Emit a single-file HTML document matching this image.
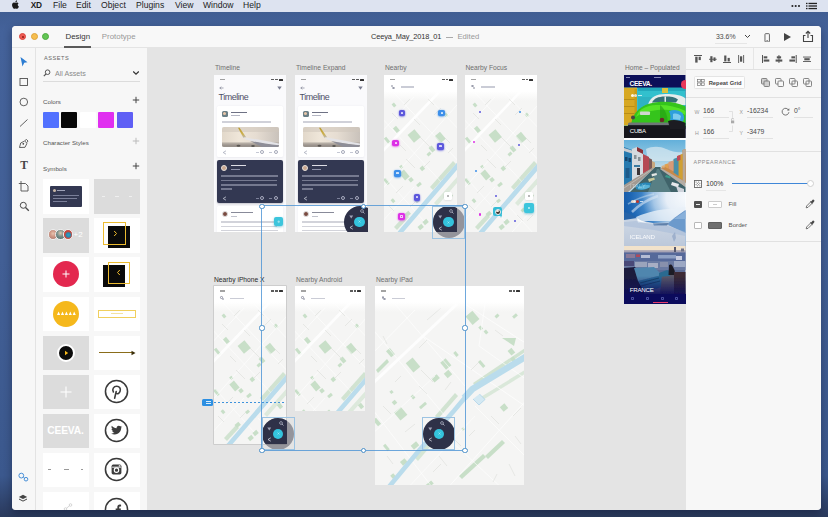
<!DOCTYPE html>
<html>
<head>
<meta charset="utf-8">
<title>XD</title>
<style>
*{margin:0;padding:0;box-sizing:border-box}
html,body{width:828px;height:517px;overflow:hidden}
body{font-family:"Liberation Sans",sans-serif;position:relative;background:linear-gradient(180deg,#3d5a8e 0%,#44629a 6%,#425f95 50%,#3b588d 92%,#2c3d62 99%,#2a3a5c 100%);color:#444}
.abs{position:absolute}
#menubar{position:absolute;left:0;top:0;width:828px;height:12px;background:#dde3f0;}
#menubar span{position:absolute;top:-.7px;line-height:12px;font-size:8.6px;color:#1c1c1c;white-space:nowrap}
#win{position:absolute;left:12px;top:26px;width:809px;height:484px;background:#f7f7f7;border-radius:4px;overflow:hidden;box-shadow:0 3px 9px rgba(0,0,20,.33)}
#titlebar{position:absolute;left:0;top:0;width:809px;height:22px;background:#f8f8f8;border-bottom:1px solid #e4e4e4}
.tl{position:absolute;top:7.400px;width:7px;height:7px;border-radius:50%}
#titlebar .t{position:absolute;top:0;line-height:22px;font-size:7.8px;white-space:nowrap}
#tools{position:absolute;left:0;top:22px;width:24px;height:462px;background:#f7f7f7;border-right:1px solid #e3e3e3}
#assets{position:absolute;left:24px;top:22px;width:111px;height:462px;background:#f7f7f7;overflow:hidden}
#canvas{position:absolute;left:135px;top:22px;width:540px;height:462px;background:#e4e4e4;overflow:hidden}
#props{position:absolute;left:674px;top:22px;width:135px;height:462px;background:#f7f7f7;overflow:hidden}
.lbl{position:absolute;font-size:7px;color:#555;white-space:nowrap;line-height:8px}
.hr{position:absolute;height:1px;background:#e1e1e1}
.cell{position:absolute;width:46px;height:34.600px;background:#fff;overflow:hidden}
.ab{position:absolute;background:#fff;overflow:hidden}
.abl{position:absolute;font-size:6.700px;color:#6b6b6b;white-space:nowrap;line-height:8px}
.hd{position:absolute;width:5px;height:5px;border-radius:50%;background:#fff;border:1px solid #4a90c8}
.sel{position:absolute;border:1px solid #4a9ad4}
</style>
</head>
<body>
<!-- MENUBAR -->
<div id="menubar">
<svg class="abs" style="left:10.800px;top:.3px" width="8.300" height="9.200" viewBox="0 0 18 20"><path fill="#1a1a1a" d="M14.6 10.6c0-2.3 1.9-3.4 2-3.5-1.1-1.6-2.8-1.8-3.4-1.8-1.4-.1-2.8.9-3.5.9-.7 0-1.800-.800-3-.800C5.200 5.400 3.800 6.300 3 7.700c-1.600 2.800-.4 6.900 1.200 9.200.800 1.100 1.700 2.400 2.900 2.300 1.200 0 1.600-.700 3-.700s1.800.700 3 .700c1.200 0 2-1.100 2.800-2.200.900-1.300 1.300-2.500 1.300-2.600-.100 0-2.600-1-2.600-3.800zM12.300 3.700c.600-.800 1.100-1.900.900-3-.900 0-2.100.600-2.700 1.400-.600.700-1.100 1.800-1 2.800 1.100.100 2.200-.500 2.800-1.200z"/></svg>
<span style="left:30.700px;font-weight:bold;font-size:8.300px;letter-spacing:-.2px">XD</span>
<span style="left:53px">File</span>
<span style="left:76px">Edit</span>
<span style="left:101px">Object</span>
<span style="left:136px">Plugins</span>
<span style="left:175px">View</span>
<span style="left:203px">Window</span>
<span style="left:243px">Help</span>
<svg class="abs" style="left:789px;top:1.500px" width="30" height="8" viewBox="0 0 30 8"><g fill="#222"><circle cx="3.400" cy="4" r="1.050"/><circle cx="6.700" cy="4" r="1.050"/><circle cx="10" cy="4" r="1.050"/><rect x="19.500" y=".8" width="8.500" height="1.300"/><rect x="19.500" y="3.350" width="8.500" height="1.300"/><rect x="19.500" y="5.900" width="8.500" height="1.300"/><rect x="17" y=".8" width="1.500" height="1.300"/><rect x="17" y="3.350" width="1.500" height="1.300"/><rect x="17" y="5.900" width="1.500" height="1.300"/></g></svg>
</div>

<div id="win">
<!-- TITLEBAR -->
<div id="titlebar">
<div class="tl" style="left:7px;background:#ee5c54;border:.5px solid #d9443d"></div>
<div class="tl" style="left:18.500px;background:#f6be4f;border:.5px solid #dea43a"></div>
<div class="tl" style="left:30px;background:#62c554;border:.5px solid #4dab3f"></div>
<div class="abs" style="left:9.500px;top:9.900px;width:2px;height:2px;border-radius:50%;background:#8c1a14"></div>
<span class="t" style="left:53.500px;color:#333;font-size:7.900px">Design</span>
<div class="abs" style="left:52px;top:20px;width:27px;height:2px;background:#5a5a5a"></div>
<span class="t" style="left:89.800px;color:#999;font-size:7.900px">Prototype</span>
<span class="t" style="left:359px;color:#333;font-size:7.400px;letter-spacing:-.12px">Ceeya_May_2018_01</span><div class="abs" style="left:433.500px;top:10.600px;width:7px;height:.9px;background:#aaa"></div><span class="t" style="left:445.400px;color:#999;font-size:7.700px">Edited</span>
<span class="t" style="left:704px;color:#4a4a4a;font-size:6.900px">33.6%</span>
<div class="abs" style="left:703px;top:17px;width:32px;height:1px;background:#e6e6e6"></div>
<svg class="abs" style="left:732px;top:8px" width="7" height="5" viewBox="0 0 7 5"><path d="M1 1l2.500 2.500L6 1" fill="none" stroke="#444" stroke-width="1"/></svg>
<svg class="abs" style="left:751.800px;top:6.500px" width="6.400" height="9.600" viewBox="0 0 8 12"><rect x="1.200" y=".8" width="5.600" height="10.400" rx="1" fill="none" stroke="#444" stroke-width="1"/><rect x="3" y="9.300" width="2" height=".8" fill="#444"/></svg>
<svg class="abs" style="left:771px;top:6px" width="9" height="10" viewBox="0 0 9 10"><path d="M1 1l7 4-7 4z" fill="#444"/></svg>
<svg class="abs" style="left:790px;top:4px" width="12" height="13" viewBox="0 0 12 13"><path d="M3.500 5.500H1.500v6h9v-6H8.500" fill="none" stroke="#444" stroke-width="1.100"/><path d="M6 8V1.500M3.800 3.500L6 1.300l2.200 2.200" fill="none" stroke="#444" stroke-width="1.100"/></svg>
</div>

<!-- TOOLBAR -->
<div id="tools">
<svg class="abs" style="left:7px;top:8px" width="10" height="12" viewBox="0 0 10 12"><path d="M1.500 1l7 5.300-3.300.5L3.500 10.500z" fill="#2d7dd2"/></svg>
<svg class="abs" style="left:7px;top:29px" width="10" height="10" viewBox="0 0 10 10"><rect x="1" y="1.500" width="7.500" height="7" fill="none" stroke="#505050" stroke-width=".9"/></svg>
<svg class="abs" style="left:7px;top:49px" width="10" height="10" viewBox="0 0 10 10"><circle cx="4.800" cy="5" r="3.800" fill="none" stroke="#505050" stroke-width=".9"/></svg>
<svg class="abs" style="left:7px;top:70px" width="10" height="10" viewBox="0 0 10 10"><path d="M1 8.500L8.500 1.500" stroke="#505050" stroke-width=".9"/></svg>
<svg class="abs" style="left:6px;top:90px" width="11" height="11" viewBox="0 0 11 11"><path d="M1.500 9.500l1.200-4.500 4-2 2.300 2.300-2 4z M7 2.500l1.500-1 1.500 1.500-1 1.500" fill="none" stroke="#505050" stroke-width=".9"/><circle cx="5.300" cy="5.800" r=".9" fill="#444"/></svg>
<div class="abs" style="left:6.500px;top:111px;width:11px;text-align:center;font-family:'Liberation Serif',serif;font-weight:bold;font-size:11.500px;line-height:12px;color:#444">T</div>
<svg class="abs" style="left:6px;top:132px" width="12" height="12" viewBox="0 0 12 12"><path d="M3 1v2.500H.8M3 3.500h4.500L10 6v5H3z" fill="none" stroke="#505050" stroke-width=".9"/></svg>
<svg class="abs" style="left:7px;top:153px" width="11" height="11" viewBox="0 0 11 11"><circle cx="4.300" cy="4.300" r="3" fill="none" stroke="#4a4a4a" stroke-width="1"/><path d="M6.500 6.500L9.800 9.800" stroke="#4a4a4a" stroke-width="1.300"/></svg>
<svg class="abs" style="left:5px;top:423.500px" width="12" height="10" viewBox="0 0 12 10"><circle cx="4.300" cy="3.600" r="2.400" fill="none" stroke="#3f8ad6" stroke-width=".95"/><circle cx="9" cy="7.200" r="1.800" fill="none" stroke="#3f8ad6" stroke-width=".95"/><path d="M6.300 5.100l1.200 .9" stroke="#3f8ad6" stroke-width=".95"/></svg>
<svg class="abs" style="left:6.200px;top:445.500px" width="10" height="9.200" viewBox="0 0 12 11"><path d="M6 1l5 2.500L6 6 1 3.500z" fill="#444"/><path d="M1.200 6L6 8.500 10.800 6" fill="none" stroke="#444" stroke-width="1.200"/></svg>
</div>

<!-- ASSETS -->
<div id="assets">
<!--ASSETS_CONTENT-->
<div class="abs" style="left:-1px;top:0;width:1px;height:462px;background:#e3e3e3"></div>
<div class="lbl" style="left:8px;top:5.800px;font-size:5.600px;letter-spacing:.55px;color:#666">ASSETS</div>
<svg class="abs" style="left:7px;top:21px" width="8" height="8" viewBox="0 0 8 8"><circle cx="4.600" cy="3.200" r="2.300" fill="none" stroke="#555" stroke-width="1"/><path d="M3 5L.8 7.200" stroke="#555" stroke-width="1.100"/></svg>
<div class="lbl" style="left:19px;top:21.800px;color:#8a8a8a;font-size:7.100px">All Assets</div>
<svg class="abs" style="left:96px;top:22px" width="8" height="6" viewBox="0 0 8 6"><path d="M1.200 1.500L4 4.200 6.800 1.500" fill="none" stroke="#333" stroke-width="1.200"/></svg>
<div class="hr" style="left:7px;top:33px;width:97px;background:#dcdcdc"></div>
<div class="lbl" style="left:7px;top:49.600px;font-size:6.200px">Colors</div>
<svg class="abs" style="left:96px;top:48px" width="8" height="8" viewBox="0 0 8 8"><path d="M4 .8v6.400M.8 4h6.400" stroke="#444" stroke-width="1"/></svg>
<div class="abs" style="left:7px;top:63.800px;width:16px;height:16px;background:#5271ff;border-radius:1px"></div>
<div class="abs" style="left:25.400px;top:63.800px;width:16px;height:16px;background:#060606;border-radius:1px"></div>
<div class="abs" style="left:43.900px;top:63.800px;width:16px;height:16px;background:#fff;border-radius:1px"></div>
<div class="abs" style="left:62.300px;top:63.800px;width:16px;height:16px;background:#e02ff0;border-radius:1px"></div>
<div class="abs" style="left:80.750px;top:63.800px;width:16px;height:16px;background:#5f5ff5;border-radius:1px"></div>
<div class="lbl" style="left:7px;top:90.700px;font-size:6.200px">Character Styles</div>
<svg class="abs" style="left:96px;top:89px" width="8" height="8" viewBox="0 0 8 8"><path d="M4 .8v6.400M.8 4h6.400" stroke="#bbb" stroke-width="1"/></svg>
<div class="lbl" style="left:7px;top:116.700px;font-size:6.200px">Symbols</div>
<svg class="abs" style="left:96px;top:114px" width="8" height="8" viewBox="0 0 8 8"><path d="M4 .8v6.400M.8 4h6.400" stroke="#444" stroke-width="1"/></svg>

<!-- row1 -->
<div class="cell" style="left:7px;top:131.2px"><div class="abs" style="left:7px;top:6.500px;width:32px;height:21px;background:#333852;border-radius:1px"></div><div class="abs" style="left:10px;top:10px;width:3px;height:3px;border-radius:50%;background:#c9b8a8"></div><div class="abs" style="left:14px;top:11px;width:8px;height:1px;background:#9ea2b8"></div><div class="abs" style="left:10px;top:16px;width:26px;height:1px;background:#7a7f99"></div><div class="abs" style="left:10px;top:19px;width:24px;height:1px;background:#7a7f99"></div><div class="abs" style="left:10px;top:22px;width:14px;height:1px;background:#7a7f99"></div></div>
<div class="cell" style="left:58px;top:131.2px;background:#dcdcdc"><div class="abs" style="left:8px;top:17px;width:3px;height:1px;background:#efefef"></div><div class="abs" style="left:21px;top:17px;width:4px;height:1px;background:#efefef"></div><div class="abs" style="left:35px;top:17px;width:3px;height:1px;background:#efefef"></div></div>
<!-- row2 -->
<div class="cell" style="left:7px;top:170.3px;background:#dcdcdc">
<div class="abs" style="left:4.500px;top:11px;width:10.500px;height:10.500px;border-radius:50%;background:radial-gradient(circle at 50% 40%,#e8c4b0 0,#d09a88 40%,#a8746a 100%);border:.8px solid #eee"></div>
<div class="abs" style="left:12px;top:11px;width:10.500px;height:10.500px;border-radius:50%;background:radial-gradient(circle at 50% 35%,#e0c8b0 0,#7a8f8a 45%,#4a6a68 100%);border:.8px solid #eee"></div>
<div class="abs" style="left:19.500px;top:11px;width:10.500px;height:10.500px;border-radius:50%;background:radial-gradient(circle at 55% 55%,#2aa3c9 0,#2a8ab0 30%,#c9463a 55%,#b83a30 100%);border:.8px solid #eee"></div>
<div class="abs" style="left:30.500px;top:12.500px;font-size:8px;line-height:8px;color:#fff">+2</div></div>
<div class="cell" style="left:58px;top:170.3px"><div class="abs" style="left:13.700px;top:8px;width:22px;height:21.500px;background:#0a0a0a"></div><div class="abs" style="left:9.400px;top:4px;width:22.400px;height:22.600px;border:1.900px solid #ecbb30"></div><svg class="abs" style="left:19px;top:12px" width="5" height="7" viewBox="0 0 5 7"><path d="M1.200 1l2.300 2.500L1.200 6" fill="none" stroke="#f0bc2e" stroke-width="1"/></svg></div>
<!-- row3 -->
<div class="cell" style="left:7px;top:209.4px"><div class="abs" style="left:10px;top:4px;width:26px;height:26px;border-radius:50%;background:#e3284f"></div><svg class="abs" style="left:19px;top:13px" width="8" height="8" viewBox="0 0 8 8"><path d="M4 .5v7M.5 4h7" stroke="#fff" stroke-width="1"/></svg></div>
<div class="cell" style="left:58px;top:209.4px"><div class="abs" style="left:9.400px;top:8px;width:22px;height:22px;background:#0a0a0a"></div><div class="abs" style="left:13.700px;top:4.300px;width:22.200px;height:22px;border:1.900px solid #ecbb30"></div><svg class="abs" style="left:22px;top:12px" width="5" height="7" viewBox="0 0 5 7"><path d="M3.800 1L1.500 3.500 3.800 6" fill="none" stroke="#f0bc2e" stroke-width="1"/></svg></div>
<!-- row4 -->
<div class="cell" style="left:7px;top:248.5px"><div class="abs" style="left:10px;top:4px;width:26px;height:26px;border-radius:50%;background:#f5b81c"></div><svg class="abs" style="left:13.500px;top:13.500px" width="19" height="6" viewBox="0 0 18 5"><path d="M0 4.500L1.500 1 3 4.500zM3.700 4.500L5.200 1l1.500 3.500zM7.400 4.500L8.900 1l1.500 3.500zM11.100 4.500L12.600 1l1.500 3.500zM14.800 4.500L16.300 1l1.500 3.500z" fill="#fff"/></svg></div>
<div class="cell" style="left:58px;top:248.5px"><div class="abs" style="left:4px;top:13px;width:38px;height:8px;border:1px solid #f0cf5e"></div><div class="abs" style="left:17px;top:16.500px;width:12px;height:1px;background:#f3e2a0"></div></div>
<!-- row5 -->
<div class="cell" style="left:7px;top:287.6px;background:#dcdcdc"><div class="abs" style="left:14px;top:8px;width:18px;height:18px;border-radius:50%;background:#0c0c0c;border:2.500px solid #fff"></div><svg class="abs" style="left:21px;top:14px" width="5" height="6" viewBox="0 0 5 6"><path d="M1 .8L4.200 3 1 5.200z" fill="#f5b81c"/></svg></div>
<div class="cell" style="left:58px;top:287.6px"><div class="abs" style="left:5px;top:16.500px;width:34px;height:1px;background:#8a6d1a"></div><svg class="abs" style="left:37px;top:14px" width="5" height="6" viewBox="0 0 5 6"><path d="M.5 .8L4.500 3 .5 5.200z" fill="#3a2e0a"/></svg></div>
<!-- row6 -->
<div class="cell" style="left:7px;top:326.7px;background:#dcdcdc"><svg class="abs" style="left:17px;top:11px" width="12" height="12" viewBox="0 0 12 12"><path d="M6 .5v11M.5 6h11" stroke="#fff" stroke-width="1.100"/></svg></div>
<div class="cell" style="left:58px;top:326.7px"><svg class="abs" style="left:10.300px;top:4.600px" width="25" height="25" viewBox="0 0 24 24"><circle cx="12" cy="12" r="10.600" fill="none" stroke="#3a3a3a" stroke-width="1.500"/><path d="M10.200 18.500l1.500-6.500M9 12.500c-1.500-2.500.2-5.500 3.200-5.500 2.800 0 4 2.200 3.300 4.600-.6 2.200-2.600 3.200-3.900 2" fill="none" stroke="#3c3c3c" stroke-width="1.500" stroke-linecap="round"/></svg></div>
<!-- row7 -->
<div class="cell" style="left:7px;top:365.8px;background:#dcdcdc"><div class="abs" style="left:4.200px;top:12.300px;width:40px;font-size:10.200px;font-weight:bold;color:#fff;letter-spacing:-.1px;line-height:10px;white-space:nowrap">CEEVA.</div></div>
<div class="cell" style="left:58px;top:365.8px"><svg class="abs" style="left:10.300px;top:4.600px" width="25" height="25" viewBox="0 0 24 24"><circle cx="12" cy="12" r="10.600" fill="none" stroke="#3a3a3a" stroke-width="1.500"/><path d="M17.500 8.300c-.4.200-.9.300-1.300.4.500-.3.800-.7 1-1.300-.4.300-.9.500-1.500.6-.9-1-2.600-.8-3.300.3-.3.500-.4 1-.3 1.600-1.800-.1-3.500-1-4.600-2.400-.6 1-.3 2.300.7 3-.4 0-.7-.1-1-.3 0 1.100.8 2 1.800 2.200-.3.100-.7.100-1 0 .3.900 1.100 1.500 2.100 1.600-.9.700-2.100 1.100-3.300.9 1 .7 2.200 1 3.400 1 4.400 0 6.600-3.800 6.300-6.700.4-.3.800-.7 1-1.100z" fill="#3c3c3c"/></svg></div>
<!-- row8 -->
<div class="cell" style="left:7px;top:404.9px"><div class="abs" style="left:4.500px;top:16.600px;width:3.500px;height:.9px;background:#999"></div><div class="abs" style="left:20.500px;top:16.600px;width:5px;height:.9px;background:#999"></div><div class="abs" style="left:37.500px;top:16.600px;width:2.200px;height:.9px;background:#999"></div></div>
<div class="cell" style="left:58px;top:404.9px"><svg class="abs" style="left:10.300px;top:4.600px" width="25" height="25" viewBox="0 0 24 24"><circle cx="12" cy="12" r="10.600" fill="none" stroke="#3a3a3a" stroke-width="1.500"/><rect x="7.300" y="7.300" width="9.400" height="9.400" rx="1.500" fill="#3c3c3c"/><circle cx="12" cy="12.600" r="2.100" fill="none" stroke="#fff" stroke-width="1.100"/><rect x="7.800" y="9.300" width="8.400" height=".9" fill="#fff"/><rect x="14.200" y="7.900" width="1.600" height="1.200" fill="#fff"/></svg></div>
<!-- row9 -->
<div class="cell" style="left:7px;top:444.0px"><svg class="abs" style="left:19.500px;top:10.500px" width="10" height="10" viewBox="0 0 10 10"><circle cx="7.500" cy="2" r="1.300" fill="none" stroke="#ccc" stroke-width=".8"/><circle cx="2.500" cy="6" r="1.300" fill="none" stroke="#ccc" stroke-width=".8"/><path d="M3.500 5.200l3-2.400" stroke="#ccc" stroke-width=".8"/></svg></div>
<div class="cell" style="left:58px;top:444.0px"><svg class="abs" style="left:10.300px;top:4.600px" width="25" height="25" viewBox="0 0 24 24"><circle cx="12" cy="12" r="10.600" fill="none" stroke="#3a3a3a" stroke-width="1.500"/><path d="M12.800 19v-6.200h-1.600v-1.800h1.600v-1.300c0-1.500.9-2.400 2.300-2.400.4 0 .9 0 1.300.1v1.600h-.9c-.7 0-.9.400-.9.900v1.100h1.700l-.3 1.800h-1.400V19z" fill="#3c3c3c"/></svg></div>
</div>

<!-- CANVAS -->
<div id="canvas">
<!--CANVAS_CONTENT-->
<svg width="0" height="0" style="position:absolute"><defs>
<g id="mapP"><rect x="-5" y="-5" width="90" height="175" fill="#f5f5f4"/>
<g fill="#c8dfc8"><rect x="25.7" y="56.0" width="9" height="10" transform="rotate(-40 30.2 61)"/><rect x="52.7" y="58.0" width="7" height="9" transform="rotate(-40 56.2 62.5)"/><rect x="10.4" y="51.4" width="4" height="6" transform="rotate(-40 12.4 54.4)"/><rect x="17.5" y="95.5" width="6" height="9" transform="rotate(-40 20.5 100)"/><rect x="46.0" y="71.0" width="4" height="6" transform="rotate(-40 48 74)"/><rect x="43.0" y="77.5" width="4" height="3" transform="rotate(-40 45 79)"/><rect x="36.3" y="91.4" width="4" height="4" transform="rotate(-40 38.3 93.4)"/><rect x="2.1" y="61.8" width="3" height="8" transform="rotate(-40 3.6 65.8)"/><rect x="25.0" y="102.8" width="4" height="4" transform="rotate(-40 27 104.8)"/><rect x="32.5" y="108.1" width="5" height="3" transform="rotate(-40 35 109.6)"/><rect x="15.7" y="90.3" width="3" height="3" transform="rotate(-40 17.2 91.8)"/><rect x="7.5" y="123.8" width="3" height="4" transform="rotate(-40 9 125.8)"/><rect x="1.1" y="102.9" width="3" height="7" transform="rotate(-40 2.6 106.4)"/><rect x="31.5" y="124.4" width="4" height="3" transform="rotate(-40 33.5 125.9)"/><rect x="21.2" y="136.9" width="5" height="4" transform="rotate(-40 23.7 138.9)"/><rect x="39.1" y="145.0" width="5" height="4" transform="rotate(-40 41.6 147)"/><rect x="34.2" y="150.0" width="5" height="4" transform="rotate(-40 36.7 152)"/><rect x="60.5" y="38.0" width="3" height="4" transform="rotate(-40 62 40)"/><rect x="64.0" y="117.5" width="4" height="5" transform="rotate(-40 66 120)"/><rect x="56.0" y="133.5" width="4" height="3" transform="rotate(-40 58 135)"/><rect x="8.5" y="28.0" width="3" height="4" transform="rotate(-40 10 30)"/><path d="M46 112 L69 86 L72 89 L49 115 Z" opacity=".8"/><path d="M10 152 L22 139 L25 142 L13 155 Z" opacity=".8"/><path d="M50 128 L73 102 L73 108 L53 131 Z" opacity=".55"/></g>
<g stroke="#fff" fill="none" opacity=".85"><path d="M-5 80 L56 16" stroke-width="2.6"/><path d="M-5 60 L30 22" stroke-width="0.70"/><path d="M-5 118 L80 22" stroke-width="0.70"/><path d="M10 18 L80 92" stroke-width="0.70"/><path d="M-5 40 L60 110" stroke-width="0.63"/><path d="M-5 96 L40 146" stroke-width="0.63"/><path d="M40 18 L80 60" stroke-width="0.63"/><path d="M-5 150 L30 112" stroke-width="0.63"/><path d="M40 165 L80 120" stroke-width="0.70"/><path d="M44 132 L70 160" stroke-width="0.63"/></g>
<g stroke="#d6d8d5" fill="none" stroke-width=".5"><path d="M36 62 L47 73 M22 84 L31 93 M40 92 L46 86 M12 118 L19 111 M50 40 L57 33 M8 38 L14 44 M56 100 L61 105 M26 132 L32 126 M44 24 L50 30 M60 62 L66 68 M4 130 L10 136 M20 30 L26 24 M52 140 L58 146 M62 146 L68 140 M16 70 L22 76 M30 44 L36 50 M64 78 L69 73"/></g>
<path d="M11 163 L15.600 158 L72.500 91.800 L80 83" stroke="#badcec" stroke-width="4.600" fill="none"/></g>
<g id="mapT"><rect x="-5" y="-5" width="165" height="215" fill="#f5f5f4"/>
<g fill="#c8dfc8"><rect x="93.0" y="26.3" width="9" height="11" transform="rotate(-40 97.5 31.8)"/><rect x="13.0" y="62.7" width="5" height="8" transform="rotate(-40 15.5 66.7)"/><rect x="33.5" y="73.0" width="9" height="12" transform="rotate(-40 38 79)"/><rect x="67.3" y="73.5" width="7" height="9" transform="rotate(-40 70.8 78)"/><rect x="70.0" y="85.0" width="6" height="6" transform="rotate(-40 73 88)"/><rect x="57.1" y="89.8" width="7" height="5" transform="rotate(-40 60.6 92.3)"/><rect x="133.9" y="62.7" width="5" height="6" transform="rotate(-40 136.4 65.7)"/><rect x="136.0" y="71.0" width="4" height="4" transform="rotate(-40 138 73)"/><rect x="105.2" y="74.0" width="3" height="8" transform="rotate(-40 106.7 78)"/><rect x="104.2" y="40.0" width="3" height="4" transform="rotate(-40 105.7 42)"/><rect x="109.5" y="44.0" width="3" height="4" transform="rotate(-40 111 46)"/><rect x="21.2" y="122.7" width="9" height="10" transform="rotate(-40 25.7 127.7)"/><rect x="0.0" y="132.0" width="4" height="8" transform="rotate(-40 2 136)"/><rect x="44.0" y="118.0" width="8" height="3" transform="rotate(-40 48 119.5)"/><rect x="36.5" y="109.0" width="3" height="4" transform="rotate(-40 38 111)"/><rect x="17.5" y="114.5" width="4" height="4" transform="rotate(-40 19.5 116.5)"/><rect x="15.0" y="104.5" width="3" height="3" transform="rotate(-40 16.5 106)"/><rect x="126.0" y="118.6" width="6" height="6" transform="rotate(-40 129 121.6)"/><rect x="36.5" y="157.0" width="7" height="5" transform="rotate(-40 40 159.5)"/><rect x="25.8" y="173.5" width="6" height="5" transform="rotate(-40 28.8 176)"/><rect x="9.9" y="158.0" width="3" height="7" transform="rotate(-40 11.4 161.5)"/><rect x="50.4" y="196.5" width="8" height="4" transform="rotate(-40 54.4 198.5)"/><rect x="79.5" y="65.5" width="3" height="5" transform="rotate(-40 81 68)"/><rect x="120.0" y="28.5" width="4" height="3" transform="rotate(-40 122 30)"/><rect x="137.5" y="28.5" width="5" height="3" transform="rotate(-40 140 30)"/><rect x="86.8" y="141.8" width="2.5" height="2.5" transform="rotate(-40 88 143)"/><rect x="16.0" y="188.0" width="4" height="4" transform="rotate(-40 18 190)"/><path d="M127 52 L141 52 L139 60 Z"/><path d="M1 84 L12 73 L14 76 L3 87 Z"/><path d="M110 170 L127 154 L130 157 L113 173 Z"/><path d="M84 190 L108 168 L111 171 L87 193 Z"/><path d="M60 130 L80 107 L83 110 L63 133 Z" opacity=".8"/><path d="M100 100 L150 66 L150 62 L98 97 Z" opacity=".8"/><path d="M104 112 L150 84 L150 88 L106 115 Z" opacity=".6"/><path d="M40 172 L56 153 L59 156 L43 175 Z" opacity=".7"/></g>
<g stroke="#fff" fill="none" opacity=".85"><path d="M-5 100 L82 18" stroke-width="3.0"/><path d="M-5 70 L40 24" stroke-width="0.77"/><path d="M48 50 L150 120" stroke-width="0.77"/><path d="M20 18 L90 100" stroke-width="0.70"/><path d="M-5 40 L70 130" stroke-width="0.70"/><path d="M-5 150 L60 90" stroke-width="0.70"/><path d="M90 18 L155 60" stroke-width="0.77"/><path d="M70 205 L155 110" stroke-width="0.77"/><path d="M-5 120 L60 205" stroke-width="0.70"/><path d="M60 140 L130 205" stroke-width="0.70"/><path d="M100 120 L155 175" stroke-width="0.70"/><path d="M110 18 L104 60 L155 96" stroke-width="0.70"/><path d="M30 205 L100 130" stroke-width="0.63"/></g>
<g stroke="#d6d8d5" fill="none" stroke-width=".5"><path d="M52 34 L66 22 M44 62 L52 54 M8 50 L12 58 M46 84 L58 96 M70 104 L76 96 M96 84 L104 76 M120 44 L128 50 M124 90 L130 84 M8 120 L16 128 M30 146 L40 138 M12 170 L18 178 M64 170 L72 180 M58 186 L66 178 M116 130 L124 138 M138 130 L146 122 M134 178 L140 190 M118 196 L122 188 M44 100 L52 108 M94 150 L100 144 M80 154 L86 160 M20 96 L26 90 M140 150 L146 158"/></g>
<path d="M8 208 L15.500 199 L43 165.700 L79 124.700 L93 108" stroke="#badcec" stroke-width="4.600" fill="none"/><path d="M89 112 L97.500 103 L152 70" stroke="#badcec" stroke-width="6.500" fill="none" stroke-linejoin="round"/><path d="M98 113 L104 119 L110 113.500 L104.500 108" stroke="#a8d0e6" stroke-width=".7" fill="#d4e9f3"/></g>
</defs></svg>
<div class="abl" style="left:68px;top:16px;color:#6f6f6f;">Timeline</div>
<div class="abl" style="left:149px;top:16px;color:#6f6f6f;">Timeline Expand</div>
<div class="abl" style="left:238px;top:16px;color:#6f6f6f;">Nearby</div>
<div class="abl" style="left:318.5px;top:16px;color:#6f6f6f;">Nearby Focus</div>
<div class="abl" style="left:478px;top:16px;color:#6f6f6f;font-size:6.6px">Home – Populated</div>
<div class="abl" style="left:67px;top:228px;color:#2a2a2a;">Nearby iPhone X</div>
<div class="abl" style="left:149px;top:228px;color:#6f6f6f;">Nearby Android</div>
<div class="abl" style="left:229px;top:228px;color:#6f6f6f;">Nearby iPad</div>
<div class="ab" style="left:67px;top:27px;width:72.4px;height:157px;background:#fafafc"><div class="abs" style="left:6px;top:4px;width:5px;height:1.400px;background:#333;opacity:.45"></div><div class="abs" style="left:57.400000000000006px;top:4px;width:3px;height:1.400px;background:#333;opacity:.8"></div><div class="abs" style="left:61.400000000000006px;top:4px;width:2.500px;height:1.400px;background:#333;opacity:.8"></div><div class="abs" style="left:64.9px;top:3.800px;width:4px;height:1.800px;background:#333;border-radius:.5px"></div><svg class="abs" style="left:5px;top:11px" width="5" height="4" viewBox="0 0 5 4"><path d="M4.500 2H.8M2.200 .6L.8 2l1.400 1.400" stroke="#6a6d80" stroke-width=".6" fill="none"/></svg><svg class="abs" style="left:63.400000000000006px;top:11px" width="5" height="4" viewBox="0 0 5 4"><path d="M.3 .4h4.400L2.500 3.800z" fill="#7a7d90"/></svg><div class="abs" style="left:4.500px;top:17px;font-size:8.900px;line-height:10px;color:#4c4f66;letter-spacing:-.42px">Timeline</div><div class="abs" style="left:3px;top:31px;width:66.4px;height:50.500px;background:#fff;border-radius:1.500px;box-shadow:0 .5px 2px rgba(60,60,100,.08)"></div><div class="abs" style="left:8px;top:35.500px;width:5.500px;height:6px;border-radius:1.500px;background:#6b7f86"></div><div class="abs" style="left:9.300px;top:36.500px;width:3px;height:3px;border-radius:50%;background:#e7c5a8"></div><div class="abs" style="left:16.5px;top:36.5px;width:16px;height:1.2px;background:#55586e;opacity:0.85"></div><div class="abs" style="left:16.5px;top:40px;width:9px;height:0.9px;background:#b5b7c4;opacity:1"></div><div class="abs" style="left:7.5px;top:46px;width:49px;height:1.5px;background:#a9acba;opacity:0.55"></div><div class="abs" style="left:7.500px;top:51.500px;width:57px;height:20px;border-radius:2px;overflow:hidden;background:linear-gradient(90deg,#e2d8ca 0%,#efe6d9 30%,#e6ddd2 60%,#c9c2bb 100%)"><svg width="57" height="20" viewBox="0 0 57 20" style="position:absolute;left:0;top:0"><defs><linearGradient id="wl" x1="0" y1="0" x2="0" y2="1"><stop offset="0" stop-color="#b89a30"/><stop offset=".6" stop-color="#cdb04a"/><stop offset="1" stop-color="#b8b8c0"/></linearGradient><filter id="bp"><feGaussianBlur stdDeviation=".35"/></filter></defs><rect y="0" width="57" height="5" fill="#cfc6bc" opacity=".55"/><rect y="15.500" width="57" height="4.500" fill="#a59d96" opacity=".8"/><rect y="17.500" width="57" height="2.500" fill="#8e8882" opacity=".7"/><g filter="url(#bp)"><path d="M16 .8l1.600-.1 6.500 9.500-2.600 .8z" fill="url(#wl)"/><path d="M21.500 10.200c10 1.500 22 4 35.500 6.200v2.200c-12-1-24-3.500-33-6z" fill="#e4e4e8"/><path d="M28 14c9 1.500 19 3.500 29 4.200v1.800H40z" fill="#8e8e98"/><ellipse cx="16.500" cy="18.800" rx="2" ry="1" fill="#5a5652"/><ellipse cx="31" cy="19" rx="1.800" ry=".9" fill="#5a5652"/></g></svg></div><svg class="abs" style="left:8px;top:74.500px" width="5" height="5" viewBox="0 0 5 5"><path d="M4 .8L1.200 2.500 4 4.200" stroke="#9a9daf" stroke-width=".7" fill="none"/></svg><div class="abs" style="left:42px;top:76.8px;width:2.5px;height:0.9px;background:#c5c8d4;opacity:1"></div><div class="abs" style="left:46px;top:75px;width:4px;height:4px;border-radius:50%;border:.6px solid #a5a8b8"></div><div class="abs" style="left:55px;top:76.8px;width:2.5px;height:0.9px;background:#c5c8d4;opacity:1"></div><div class="abs" style="left:59.500px;top:75px;width:4px;height:4px;border-radius:50%;border:.6px solid #a5a8b8"></div><div class="abs" style="left:2.700px;top:85px;width:66.7px;height:42.500px;background:#333852;border-radius:2px;box-shadow:0 1px 2px rgba(30,30,60,.25)"></div><div class="abs" style="left:7.200px;top:89.500px;width:6px;height:6px;border-radius:50%;background:#c9a790;border:.6px solid #e8e0da"></div><div class="abs" style="left:16.5px;top:90.3px;width:15px;height:1.2px;background:#f1f1f6;opacity:0.9"></div><div class="abs" style="left:16.5px;top:93.9px;width:9px;height:0.9px;background:#8f93aa;opacity:1"></div><div class="abs" style="left:7.3px;top:100.4px;width:57px;height:1.5px;background:#b7bacb;opacity:0.5"></div><div class="abs" style="left:7.3px;top:104.7px;width:56px;height:1.5px;background:#b7bacb;opacity:0.5"></div><div class="abs" style="left:7.3px;top:109.0px;width:56px;height:1.5px;background:#b7bacb;opacity:0.5"></div><div class="abs" style="left:7.3px;top:113.30000000000001px;width:11px;height:1.5px;background:#b7bacb;opacity:0.5"></div><svg class="abs" style="left:8px;top:120.500px" width="5" height="5" viewBox="0 0 5 5"><path d="M4 .8L1.200 2.500 4 4.200" stroke="#d5d7e4" stroke-width=".7" fill="none"/></svg><div class="abs" style="left:42px;top:122.8px;width:2.5px;height:0.9px;background:#7d819a;opacity:1"></div><div class="abs" style="left:46px;top:121px;width:4px;height:4px;border-radius:50%;border:.6px solid #a9acc0"></div><div class="abs" style="left:55px;top:122.8px;width:2.5px;height:0.9px;background:#7d819a;opacity:1"></div><div class="abs" style="left:59.500px;top:121px;width:4px;height:4px;border-radius:50%;border:.6px solid #a9acc0"></div><div class="abs" style="left:3px;top:130.500px;width:66.4px;height:30px;background:#fff;border-radius:1.500px;box-shadow:0 .5px 2px rgba(60,60,100,.08)"></div><div class="abs" style="left:7.500px;top:136px;width:6px;height:6px;border-radius:50%;background:#7a4a40;border:.6px solid #ddd"></div><div class="abs" style="left:16.5px;top:137px;width:22px;height:1.2px;background:#6a6d80;opacity:0.8"></div><div class="abs" style="left:16.5px;top:140.6px;width:6px;height:0.9px;background:#c0c2cc;opacity:1"></div><div class="abs" style="left:7.3px;top:146.3px;width:57px;height:1.5px;background:#b4b6c2;opacity:0.6"></div><div class="abs" style="left:7.3px;top:150.5px;width:56px;height:1.5px;background:#b4b6c2;opacity:0.6"></div><div class="abs" style="left:7.3px;top:154.70000000000002px;width:57px;height:1.5px;background:#b4b6c2;opacity:0.6"></div><div class="abs" style="left:59.500px;top:142px;width:9.500px;height:9px;border-radius:2px;background:#3cc5dc;box-shadow:0 1px 2.500px rgba(40,160,190,.55)"></div><svg class="abs" style="left:62.500px;top:145px" width="3.500" height="3.500" viewBox="0 0 4 4"><path d="M2 .4v3.200M.4 2h3.200" stroke="#d6f3f8" stroke-width=".6"/></svg></div>
<div class="ab" style="left:148px;top:27px;width:72px;height:157px;background:#fafafc"><div class="abs" style="left:6px;top:4px;width:5px;height:1.400px;background:#333;opacity:.45"></div><div class="abs" style="left:57px;top:4px;width:3px;height:1.400px;background:#333;opacity:.8"></div><div class="abs" style="left:61px;top:4px;width:2.500px;height:1.400px;background:#333;opacity:.8"></div><div class="abs" style="left:64.5px;top:3.800px;width:4px;height:1.800px;background:#333;border-radius:.5px"></div><svg class="abs" style="left:5px;top:11px" width="5" height="4" viewBox="0 0 5 4"><path d="M4.500 2H.8M2.200 .6L.8 2l1.400 1.400" stroke="#6a6d80" stroke-width=".6" fill="none"/></svg><svg class="abs" style="left:63px;top:11px" width="5" height="4" viewBox="0 0 5 4"><path d="M.3 .4h4.400L2.500 3.800z" fill="#7a7d90"/></svg><div class="abs" style="left:4.500px;top:17px;font-size:8.900px;line-height:10px;color:#4c4f66;letter-spacing:-.42px">Timeline</div><div class="abs" style="left:3px;top:31px;width:66px;height:50.500px;background:#fff;border-radius:1.500px;box-shadow:0 .5px 2px rgba(60,60,100,.08)"></div><div class="abs" style="left:8px;top:35.500px;width:5.500px;height:6px;border-radius:1.500px;background:#6b7f86"></div><div class="abs" style="left:9.300px;top:36.500px;width:3px;height:3px;border-radius:50%;background:#e7c5a8"></div><div class="abs" style="left:16.5px;top:36.5px;width:16px;height:1.2px;background:#55586e;opacity:0.85"></div><div class="abs" style="left:16.5px;top:40px;width:9px;height:0.9px;background:#b5b7c4;opacity:1"></div><div class="abs" style="left:7.5px;top:46px;width:49px;height:1.5px;background:#a9acba;opacity:0.55"></div><div class="abs" style="left:7.500px;top:51.500px;width:57px;height:20px;border-radius:2px;overflow:hidden;background:linear-gradient(90deg,#e2d8ca 0%,#efe6d9 30%,#e6ddd2 60%,#c9c2bb 100%)"><svg width="57" height="20" viewBox="0 0 57 20" style="position:absolute;left:0;top:0"><defs><linearGradient id="wl" x1="0" y1="0" x2="0" y2="1"><stop offset="0" stop-color="#b89a30"/><stop offset=".6" stop-color="#cdb04a"/><stop offset="1" stop-color="#b8b8c0"/></linearGradient><filter id="bp"><feGaussianBlur stdDeviation=".35"/></filter></defs><rect y="0" width="57" height="5" fill="#cfc6bc" opacity=".55"/><rect y="15.500" width="57" height="4.500" fill="#a59d96" opacity=".8"/><rect y="17.500" width="57" height="2.500" fill="#8e8882" opacity=".7"/><g filter="url(#bp)"><path d="M16 .8l1.600-.1 6.500 9.500-2.600 .8z" fill="url(#wl)"/><path d="M21.500 10.200c10 1.500 22 4 35.500 6.200v2.200c-12-1-24-3.500-33-6z" fill="#e4e4e8"/><path d="M28 14c9 1.500 19 3.500 29 4.200v1.800H40z" fill="#8e8e98"/><ellipse cx="16.500" cy="18.800" rx="2" ry="1" fill="#5a5652"/><ellipse cx="31" cy="19" rx="1.800" ry=".9" fill="#5a5652"/></g></svg></div><svg class="abs" style="left:8px;top:74.500px" width="5" height="5" viewBox="0 0 5 5"><path d="M4 .8L1.200 2.500 4 4.200" stroke="#9a9daf" stroke-width=".7" fill="none"/></svg><div class="abs" style="left:42px;top:76.8px;width:2.5px;height:0.9px;background:#c5c8d4;opacity:1"></div><div class="abs" style="left:46px;top:75px;width:4px;height:4px;border-radius:50%;border:.6px solid #a5a8b8"></div><div class="abs" style="left:55px;top:76.8px;width:2.5px;height:0.9px;background:#c5c8d4;opacity:1"></div><div class="abs" style="left:59.500px;top:75px;width:4px;height:4px;border-radius:50%;border:.6px solid #a5a8b8"></div><div class="abs" style="left:2.700px;top:85px;width:66.3px;height:42.500px;background:#333852;border-radius:2px;box-shadow:0 1px 2px rgba(30,30,60,.25)"></div><div class="abs" style="left:7.200px;top:89.500px;width:6px;height:6px;border-radius:50%;background:#c9a790;border:.6px solid #e8e0da"></div><div class="abs" style="left:16.5px;top:90.3px;width:15px;height:1.2px;background:#f1f1f6;opacity:0.9"></div><div class="abs" style="left:16.5px;top:93.9px;width:9px;height:0.9px;background:#8f93aa;opacity:1"></div><div class="abs" style="left:7.3px;top:100.4px;width:57px;height:1.5px;background:#b7bacb;opacity:0.5"></div><div class="abs" style="left:7.3px;top:104.7px;width:56px;height:1.5px;background:#b7bacb;opacity:0.5"></div><div class="abs" style="left:7.3px;top:109.0px;width:56px;height:1.5px;background:#b7bacb;opacity:0.5"></div><div class="abs" style="left:7.3px;top:113.30000000000001px;width:11px;height:1.5px;background:#b7bacb;opacity:0.5"></div><svg class="abs" style="left:8px;top:120.500px" width="5" height="5" viewBox="0 0 5 5"><path d="M4 .8L1.200 2.500 4 4.200" stroke="#d5d7e4" stroke-width=".7" fill="none"/></svg><div class="abs" style="left:42px;top:122.8px;width:2.5px;height:0.9px;background:#7d819a;opacity:1"></div><div class="abs" style="left:46px;top:121px;width:4px;height:4px;border-radius:50%;border:.6px solid #a9acc0"></div><div class="abs" style="left:55px;top:122.8px;width:2.5px;height:0.9px;background:#7d819a;opacity:1"></div><div class="abs" style="left:59.500px;top:121px;width:4px;height:4px;border-radius:50%;border:.6px solid #a9acc0"></div><div class="abs" style="left:3px;top:130.500px;width:66px;height:30px;background:#fff;border-radius:1.500px;box-shadow:0 .5px 2px rgba(60,60,100,.08)"></div><div class="abs" style="left:7.500px;top:136px;width:6px;height:6px;border-radius:50%;background:#7a4a40;border:.6px solid #ddd"></div><div class="abs" style="left:16.5px;top:137px;width:22px;height:1.2px;background:#6a6d80;opacity:0.8"></div><div class="abs" style="left:16.5px;top:140.6px;width:6px;height:0.9px;background:#c0c2cc;opacity:1"></div><div class="abs" style="left:7.3px;top:146.3px;width:57px;height:1.5px;background:#b4b6c2;opacity:0.6"></div><div class="abs" style="left:7.3px;top:150.5px;width:56px;height:1.5px;background:#b4b6c2;opacity:0.6"></div><div class="abs" style="left:7.3px;top:154.70000000000002px;width:57px;height:1.5px;background:#b4b6c2;opacity:0.6"></div></div>
<div class="ab" style="left:237.10000000000002px;top:27px;width:72.800px;height:157px"><svg class="abs" style="left:0;top:0" width="73" height="157" viewBox="0 0 73 157"><use href="#mapP"/></svg><div class="abs" style="left:0;top:0;width:72.8px;height:26px;background:linear-gradient(180deg,#fff 0%,#fff 62%,rgba(255,255,255,.75) 72%,rgba(255,255,255,0) 100%)"></div><div class="abs" style="left:6px;top:4px;width:5px;height:1.400px;background:#333;opacity:.45"></div><div class="abs" style="left:57.8px;top:4px;width:3px;height:1.400px;background:#333;opacity:.8"></div><div class="abs" style="left:61.8px;top:4px;width:2.500px;height:1.400px;background:#333;opacity:.8"></div><div class="abs" style="left:65.3px;top:3.800px;width:4px;height:1.800px;background:#333;border-radius:.5px"></div><div class="abs" style="left:6.800px;top:10.100px;width:2.300px;height:2.300px;border-radius:50%;border:.5px solid #9a9cac"></div><div class="abs" style="left:8.300px;top:11.600px;width:2.300px;height:2.300px;border-radius:50%;border:.5px solid #9a9cac"></div><div class="abs" style="left:16.8px;top:11.4px;width:13.5px;height:1.2px;background:#b4b6c4;opacity:0.7"></div><div class="abs" style="left:14.499999999999977px;top:34.6px;width:6.8px;height:6.8px;border-radius:1.800px;background:#5d58dc;box-shadow:0 .5px 2px #5d58dc"></div><div class="abs" style="left:16.699999999999978px;top:36.8px;width:2.400px;height:2.400px;border-radius:.6px;border:.5px solid rgba(255,255,255,.75)"></div><div class="abs" style="left:54.29999999999999px;top:34.6px;width:6.8px;height:6.8px;border-radius:1.800px;background:#3d8fea;box-shadow:0 .5px 2px #3d8fea"></div><div class="abs" style="left:56.499999999999986px;top:36.8px;width:2.400px;height:2.400px;border-radius:.6px;border:.5px solid rgba(255,255,255,.75)"></div><div class="abs" style="left:8.299999999999988px;top:64.6px;width:6.8px;height:6.8px;border-radius:1.800px;background:#dd2fe6;box-shadow:0 .5px 2px #dd2fe6"></div><div class="abs" style="left:10.49999999999999px;top:66.8px;width:2.400px;height:2.400px;border-radius:.6px;border:.5px solid rgba(255,255,255,.75)"></div><div class="abs" style="left:52.99999999999998px;top:67.9px;width:6.8px;height:6.8px;border-radius:1.800px;background:#5d58dc;box-shadow:0 .5px 2px #5d58dc"></div><div class="abs" style="left:55.199999999999974px;top:70.10000000000001px;width:2.400px;height:2.400px;border-radius:.6px;border:.5px solid rgba(255,255,255,.75)"></div><div class="abs" style="left:9.899999999999954px;top:94.9px;width:6.8px;height:6.8px;border-radius:1.800px;background:#3d8fea;box-shadow:0 .5px 2px #3d8fea"></div><div class="abs" style="left:12.099999999999955px;top:97.10000000000001px;width:2.400px;height:2.400px;border-radius:.6px;border:.5px solid rgba(255,255,255,.75)"></div><div class="abs" style="left:29.49999999999998px;top:118.9px;width:6.8px;height:6.8px;border-radius:1.800px;background:#5d58dc;box-shadow:0 .5px 2px #5d58dc"></div><div class="abs" style="left:31.699999999999978px;top:121.10000000000001px;width:2.400px;height:2.400px;border-radius:.6px;border:.5px solid rgba(255,255,255,.75)"></div><div class="abs" style="left:14.199999999999966px;top:138.0px;width:6.8px;height:6.8px;border-radius:1.800px;background:#dd2fe6;box-shadow:0 .5px 2px #dd2fe6"></div><div class="abs" style="left:16.399999999999967px;top:140.20000000000002px;width:2.400px;height:2.400px;border-radius:.6px;border:.5px solid rgba(255,255,255,.75)"></div><div class="abs" style="left:60.299999999999955px;top:116.69999999999999px;width:8px;height:8px;border-radius:1.500px;background:#fff;box-shadow:0 .5px 2px rgba(0,0,0,.12)"></div><div class="abs" style="left:63.299999999999955px;top:119.49999999999999px;width:2px;height:2px;border:.5px solid #888;border-radius:50%"></div></div>
<div class="ab" style="left:317.6px;top:27px;width:72.400px;height:157px"><svg class="abs" style="left:0;top:0" width="73" height="157" viewBox="0 0 73 157"><use href="#mapP"/></svg><div class="abs" style="left:0;top:0;width:72.4px;height:26px;background:linear-gradient(180deg,#fff 0%,#fff 62%,rgba(255,255,255,.75) 72%,rgba(255,255,255,0) 100%)"></div><div class="abs" style="left:6px;top:4px;width:5px;height:1.400px;background:#333;opacity:.45"></div><div class="abs" style="left:57.400000000000006px;top:4px;width:3px;height:1.400px;background:#333;opacity:.8"></div><div class="abs" style="left:61.400000000000006px;top:4px;width:2.500px;height:1.400px;background:#333;opacity:.8"></div><div class="abs" style="left:64.9px;top:3.800px;width:4px;height:1.800px;background:#333;border-radius:.5px"></div><div class="abs" style="left:6.800px;top:10.100px;width:2.300px;height:2.300px;border-radius:50%;border:.5px solid #9a9cac"></div><div class="abs" style="left:8.300px;top:11.600px;width:2.300px;height:2.300px;border-radius:50%;border:.5px solid #9a9cac"></div><div class="abs" style="left:16.8px;top:11.4px;width:13.5px;height:1.2px;background:#b4b6c4;opacity:0.7"></div><div class="abs" style="left:14.226470588235282px;top:35.51764705882352px;width:2.2px;height:2.2px;border-radius:50%;background:#5d58dc"></div><div class="abs" style="left:54.299999999999976px;top:35.51764705882352px;width:2.2px;height:2.2px;border-radius:50%;background:#3d8fea"></div><div class="abs" style="left:8.344117647058761px;top:65.66470588235293px;width:2.2px;height:2.2px;border-radius:50%;background:#dd2fe6"></div><div class="abs" style="left:53.19705882352937px;top:68.60588235294117px;width:2.2px;height:2.2px;border-radius:50%;background:#5d58dc"></div><div class="abs" style="left:10.182352941176442px;top:95.07647058823531px;width:2.2px;height:2.2px;border-radius:50%;background:#3d8fea"></div><div class="abs" style="left:30.035294117647048px;top:119.70882352941177px;width:2.2px;height:2.2px;border-radius:50%;background:#5d58dc"></div><div class="abs" style="left:14.594117647058761px;top:138.45882352941175px;width:2.2px;height:2.2px;border-radius:50%;background:#dd2fe6"></div><div class="abs" style="left:49.52058823529412px;top:145.07647058823528px;width:2.2px;height:2.2px;border-radius:50%;background:#5d58dc"></div><div class="abs" style="left:60.39999999999998px;top:117px;width:8px;height:8px;border-radius:1.500px;background:#fff;box-shadow:0 .5px 2px rgba(0,0,0,.12)"></div><div class="abs" style="left:63.39999999999998px;top:119.8px;width:2px;height:2px;border:.5px solid #888;border-radius:50%"></div><div class="abs" style="left:59.39999999999998px;top:127.5px;width:10px;height:10px;border-radius:2px;background:#3cc5dc;box-shadow:0 1px 2.500px rgba(40,160,190,.55)"></div><div class="abs" style="left:63.39999999999998px;top:131.5px;width:2px;height:2px;border-radius:50%;background:#c8f0f6"></div><div class="abs" style="left:28.5px;top:132.0px;width:9px;height:9px;border-radius:2px;background:#35bcd6"></div><div class="abs" style="left:30.0px;top:133.5px;width:6px;height:6px;border-radius:50%;background:#40362e;border:.7px solid #e8f6fa"></div><div class="abs" style="left:31.7px;top:134.5px;width:2.600px;height:2.600px;border-radius:50%;background:#f0e6dc"></div><div class="abs" style="left:35.0px;top:140.0px;width:0;height:0;border-left:1.500px solid transparent;border-right:1.500px solid transparent;border-top:3px solid #35bcd6"></div></div>
<div class="ab" style="left:66.5px;top:238.2px;width:72.700px;height:157.800px;box-shadow:0 0 0 .7px #c4c4c4"><svg class="abs" style="left:0;top:0" width="73" height="158" viewBox="0 0 73 158"><use href="#mapP"/></svg><div class="abs" style="left:0;top:0;width:72.7px;height:26px;background:linear-gradient(180deg,#fff 0%,#fff 62%,rgba(255,255,255,.75) 72%,rgba(255,255,255,0) 100%)"></div><div class="abs" style="left:6px;top:4px;width:5px;height:1.400px;background:#333;opacity:.45"></div><div class="abs" style="left:57.7px;top:4px;width:3px;height:1.400px;background:#333;opacity:.8"></div><div class="abs" style="left:61.7px;top:4px;width:2.500px;height:1.400px;background:#333;opacity:.8"></div><div class="abs" style="left:65.2px;top:3.800px;width:4px;height:1.800px;background:#333;border-radius:.5px"></div><div class="abs" style="left:6.800px;top:10.100px;width:2.300px;height:2.300px;border-radius:50%;border:.5px solid #9a9cac"></div><div class="abs" style="left:8.300px;top:11.600px;width:2.300px;height:2.300px;border-radius:50%;border:.5px solid #9a9cac"></div><div class="abs" style="left:16.8px;top:11.4px;width:13.5px;height:1.2px;background:#b4b6c4;opacity:0.7"></div></div>
<div class="ab" style="left:147.5px;top:238.2px;width:70.100px;height:125px"><svg class="abs" style="left:0;top:0" width="70.5" height="125" viewBox="0 0 70.5 125"><use href="#mapP"/></svg><div class="abs" style="left:0;top:0;width:70.1px;height:26px;background:linear-gradient(180deg,#fff 0%,#fff 62%,rgba(255,255,255,.75) 72%,rgba(255,255,255,0) 100%)"></div><div class="abs" style="left:6px;top:4px;width:5px;height:1.400px;background:#333;opacity:.45"></div><div class="abs" style="left:55.099999999999994px;top:4px;width:3px;height:1.400px;background:#333;opacity:.8"></div><div class="abs" style="left:59.099999999999994px;top:4px;width:2.500px;height:1.400px;background:#333;opacity:.8"></div><div class="abs" style="left:62.599999999999994px;top:3.800px;width:4px;height:1.800px;background:#333;border-radius:.5px"></div><div class="abs" style="left:6.800px;top:10.100px;width:2.300px;height:2.300px;border-radius:50%;border:.5px solid #9a9cac"></div><div class="abs" style="left:8.300px;top:11.600px;width:2.300px;height:2.300px;border-radius:50%;border:.5px solid #9a9cac"></div><div class="abs" style="left:16.8px;top:11.4px;width:13.5px;height:1.2px;background:#b4b6c4;opacity:0.7"></div></div>
<div class="ab" style="left:228px;top:238.2px;width:148.500px;height:199px"><svg class="abs" style="left:0;top:0" width="148.5" height="199" viewBox="0 0 148.5 199"><use href="#mapT"/></svg><div class="abs" style="left:0;top:0;width:148.5px;height:26px;background:linear-gradient(180deg,#fff 0%,#fff 62%,rgba(255,255,255,.75) 72%,rgba(255,255,255,0) 100%)"></div><div class="abs" style="left:6px;top:4px;width:5px;height:1.400px;background:#333;opacity:.45"></div><div class="abs" style="left:133.5px;top:4px;width:3px;height:1.400px;background:#333;opacity:.8"></div><div class="abs" style="left:137.5px;top:4px;width:2.500px;height:1.400px;background:#333;opacity:.8"></div><div class="abs" style="left:141.0px;top:3.800px;width:4px;height:1.800px;background:#333;border-radius:.5px"></div><div class="abs" style="left:6.800px;top:10.100px;width:2.300px;height:2.300px;border-radius:50%;border:.5px solid #9a9cac"></div><div class="abs" style="left:8.300px;top:11.600px;width:2.300px;height:2.300px;border-radius:50%;border:.5px solid #9a9cac"></div><div class="abs" style="left:16.8px;top:11.4px;width:13.5px;height:1.2px;background:#b4b6c4;opacity:0.7"></div></div>
<div class="ab" style="left:477px;top:27px;width:61.5px;height:228.5px;background:#fff;box-shadow:none"><svg class="abs" style="left:0;top:0" width="61.500" height="63.300" viewBox="0 0 61.500 63.300">
<defs><filter id="b1" x="-5%" y="-5%" width="110%" height="110%"><feGaussianBlur stdDeviation=".45"/></filter></defs>
<rect width="61.500" height="63.300" fill="#0c0f58"/>
<g filter="url(#b1)">
<rect y="12.600" width="61.500" height="40" fill="#33c0cd"/>
<rect x="14" y="13" width="47.500" height="3" fill="#22a9bb"/>
<rect x="38" y="13" width="6" height="5" fill="#d8c23a"/>
<rect x="0" y="12.600" width="13" height="38" fill="#d7a823"/>
<rect x="0" y="24" width="12" height="1" fill="#b98d18"/><rect x="0" y="31" width="12" height="1" fill="#b98d18"/><rect x="0" y="38" width="12" height="1" fill="#b98d18"/>
<rect x="10.500" y="14" width="2.500" height="34" fill="#c59a1c"/>
<path d="M14 22h14v6l-14 8z" fill="#2db2c2"/>
<path d="M24.500 28c2.500-6 8-9 17-9 9 0 16 1 20 4.500V30H24.500z" fill="#e6eceb"/>
<path d="M28 27.500c2-4 6-6 13-6 6 0 10 .5 13 3l-2 3z" fill="#356f76"/>
<path d="M40.500 21.500h1.500v6h-1.500z" fill="#e6eceb"/>
<path d="M7 52c0-10 6-20 19-23.500 12-3 26-2 35.500 3V52z" fill="#35c41a"/>
<path d="M12 42c3-8 10-11.500 20-12 10-.5 20 1 29.500 6v4c-9-5-18-6-28-5-9 1-16 3-21.500 7z" fill="#55e326"/>
<path d="M36 30c5 4 8 10 8 21h-8z" fill="#2aa315" opacity=".7"/>
<path d="M45 36c5-2 10-1 13.500 2 2 3 2 6 .5 8.500L46 45c.8-3 .4-6-1-9z" fill="#2f9fdc"/>
<path d="M49 39c3-1 6 0 8 2l-1 4-7-1z" fill="#7ccbee"/>
<rect x="16" y="36.500" width="10" height="3.500" rx=".8" fill="#cfd6cf"/>
<circle cx="9" cy="42.500" r="2" fill="#444"/><circle cx="38" cy="45" r="2.300" fill="#6b2a2a"/>
<rect x="4" y="47.500" width="42" height="4" rx="1.500" fill="#6f7678"/>
<rect x="4" y="50" width="42" height="3" fill="#24272c"/>
<path d="M0 51h61.500v12.300H0z" fill="#15161c"/>
<path d="M44 46c5-2 12-1 17.500 2v6H46z" fill="#1c1d24"/>
</g>
</svg><div class="abs" style="left:5.500px;top:5.300px;font-size:6.700px;font-weight:bold;color:#fff;line-height:8px;letter-spacing:-.35px">CEEVA.</div><div class="abs" style="left:6.500px;top:18.800px;width:3px;height:3px;border-radius:50%;background:#fff;opacity:.9"></div><div class="abs" style="left:9.500px;top:18.800px;width:3px;height:3px;border-radius:50%;background:#e8e0d0"></div><div class="abs" style="left:13.500px;top:20px;width:4px;height:.8px;background:#fff;opacity:.7"></div><div class="abs" style="left:5.700px;top:52.300px;font-size:6.100px;color:#fff;line-height:8px;letter-spacing:-.2px">CUBA</div><div class="abs" style="left:57px;top:5px;width:8.500px;height:8.500px;border-radius:50%;background:#e8385a"></div><div class="abs" style="left:1.500px;top:2px;width:4px;height:.9px;background:#b8bce0;opacity:.7"></div><div class="abs" style="left:30px;top:2px;width:7px;height:.9px;background:#b8bce0;opacity:.7"></div><svg class="abs" style="left:0;top:64.500px" width="61.500" height="52" viewBox="0 0 61.500 52">
<defs><linearGradient id="vsky" x1="0" y1="0" x2="0" y2="1"><stop offset="0" stop-color="#63b0da"/><stop offset=".3" stop-color="#8fc6e2"/><stop offset=".55" stop-color="#c3dde9"/><stop offset="1" stop-color="#c3dde9"/></linearGradient>
<filter id="b2" x="-5%" y="-5%" width="110%" height="110%"><feGaussianBlur stdDeviation=".4"/></filter></defs>
<rect width="61.500" height="52" fill="url(#vsky)"/>
<g filter="url(#b2)">
<path d="M22 9c6-3 14-3 20 0 5 2 10 4 19.500 3v9H24z" fill="#dbeaf1" opacity=".7"/>
<!-- water -->
<path d="M6 52L31 27h5l25.500 20v5z" fill="#40646a"/>
<path d="M24 52L33 29h2l12 23z" fill="#587f84"/>
<!-- left buildings -->
<path d="M0 7l8 3v31L0 46z" fill="#2879ae"/>
<path d="M0 8l8 2.500v3L0 11z" fill="#c9ccd0"/>
<path d="M8 9l5-2 6 3v24L8 41z" fill="#d5dadf"/>
<path d="M13 7l6 3v4l-6-3z" fill="#8a3038"/>
<path d="M19 14l6 3v13l-6 4z" fill="#b54a52"/>
<path d="M25 18l3 1.500v9l-3 2z" fill="#7a5a58"/>
<path d="M28 21l3 1.500v5l-3 1.500z" fill="#c8a880"/>
<rect x="1" y="17" width="2.500" height="4" fill="#17456e"/><rect x="4.500" y="18" width="2.500" height="4" fill="#17456e"/><rect x="1.500" y="28" width="4" height="10" fill="#1f5a8a"/>
<rect x="10" y="15" width="2.500" height="4" fill="#8a9298"/><rect x="14" y="17" width="2.500" height="4" fill="#8a9298"/><rect x="10" y="25" width="6" height="2" fill="#3a7aa0"/><rect x="13" y="28" width="3" height="7" fill="#3a3438"/>
<!-- left quay -->
<path d="M0 45l28-17 1.500 1L4 52H0z" fill="#a29a92"/>
<path d="M0 48l27-18" stroke="#c8c2bc" stroke-width=".8"/>
<!-- right buildings -->
<path d="M61.500 9l-3 1v4l-4 1.500v3l-5 1.500v2l-5 1.500v2l-4 1-3 1v2l25 14z" fill="#c8894a"/>
<path d="M58.500 10l3-1v34l-3-3z" fill="#b8a898"/>
<path d="M54.500 15.500l4-1.500v26l-4-3z" fill="#d0a030"/>
<path d="M49.500 19l5-2v19l-5-3.500z" fill="#4a8fa8"/>
<path d="M53 16l3.500-1v5l-3.500 1z" fill="#c04a5a"/>
<path d="M44.500 22l5-1.500v11l-5-3z" fill="#d89a78"/>
<path d="M40.500 24.500l4-1.200v5.500l-4-2z" fill="#e0a050"/>
<path d="M37.500 26l3-1v3l-3-1z" fill="#d8b080"/>
<!-- right quay -->
<path d="M37 28l24.500 14v5L36 29z" fill="#b5ada5"/>
<!-- boats -->
<path d="M12 46c3-3 9-4.500 15-3l-1 4c-4 3-10 4-14 2z" fill="#2a8aba"/>
<path d="M14 47c4-2 8-2.500 12-1.500l-.5 2c-4 2-8 2.500-11.500 1.500z" fill="#5ab4d8"/>
<path d="M24 39l6-1.500 1 2-6 2.500z" fill="#c8c89a"/><path d="M27.500 34l5-1 .5 2-5 1.500z" fill="#e4e6e4"/>
<path d="M42 35l5 1.500-1 2-5-1.500z" fill="#3a9a8a"/>
<path d="M48 42l7 2-1 3.500-7-2.500z" fill="#e6e8ec"/>
<path d="M52 46l8 3v3h-6z" fill="#d0d4dc"/>
</g>
</svg><div class="abs" style="left:5.700px;top:106.500px;font-size:6.100px;color:#fff;line-height:8px;opacity:.35">ITALY</div><svg class="abs" style="left:0;top:116.500px" width="61.500" height="54" viewBox="0 0 61.500 54">
<defs><radialGradient id="isky" cx="1" cy=".1" r="1.050"><stop offset="0" stop-color="#f6f9fc"/><stop offset=".3" stop-color="#e6eef7"/><stop offset=".5" stop-color="#a4c6e6"/><stop offset=".68" stop-color="#3c82c6"/><stop offset=".85" stop-color="#1d66b4"/><stop offset="1" stop-color="#185aa6"/></radialGradient>
<linearGradient id="isnow" x1="0" y1="0" x2="0" y2="1"><stop offset="0" stop-color="#b4c8e2"/><stop offset=".35" stop-color="#ccd6e4"/><stop offset="1" stop-color="#bcc8da"/></linearGradient>
<filter id="b3" x="-5%" y="-5%" width="110%" height="110%"><feGaussianBlur stdDeviation=".5"/></filter></defs>
<rect width="61.500" height="54" fill="url(#isky)"/>
<g filter="url(#b3)">
<path d="M8 20c6-6 14-12 26-16" stroke="#d8e6f4" stroke-width="2.500" fill="none" opacity=".6"/>
<path d="M4 12c8-5 16-8 26-10" stroke="#d8e6f4" stroke-width="1.500" fill="none" opacity=".45"/>
<path d="M10 26c8-4 20-8 34-9l17.500-2v14H10z" fill="#e8f0f8" opacity=".8"/>
<path d="M0 20c5 1 9 3 14 7l-14 3z" fill="#2563a8"/>
<path d="M0 28l13-2 4 2.500 12 2.500 16-.5 6-5 10.500-7.500V54H0z" fill="url(#isnow)"/>
<path d="M45 30.500l6-5 10.500-7.500v23L44 33z" fill="#6c9acc"/>
<path d="M50 27l11.500-8v8z" fill="#88b0da"/>
<path d="M13 26l4 2.500 6 2-9 .5z" fill="#f6fafd"/>
<path d="M29 31.500l16-.5-2 2.500-13 .5z" fill="#3a6498" opacity=".75"/>
<path d="M0 30l12-1 14 3 18 2 17.500 6v4L30 38 0 34z" fill="#a8bcd8" opacity=".6"/>
<path d="M48 44l3-4 1 6-2 4z" fill="#8ea4c4" opacity=".7"/>
</g>
</svg><div class="abs" style="left:5.700px;top:158.400px;font-size:6.100px;color:#fff;line-height:8px;letter-spacing:-.2px;opacity:.92">ICELAND</div><div class="abs" style="left:6.500px;top:125px;width:3px;height:3px;border-radius:50%;background:#e8d8c8;opacity:.95"></div><div class="abs" style="left:9.300px;top:125px;width:3px;height:3px;border-radius:50%;background:#f4ece4"></div><div class="abs" style="left:12px;top:125px;width:3px;height:3px;border-radius:50%;background:#c0382a"></div><div class="abs" style="left:16px;top:126.200px;width:3px;height:.8px;background:#fff;opacity:.7"></div><svg class="abs" style="left:0;top:170.500px" width="61.500" height="49" viewBox="0 0 61.500 49">
<defs><filter id="b4" x="-5%" y="-5%" width="110%" height="110%"><feGaussianBlur stdDeviation=".5"/></filter>
<linearGradient id="ffade" x1="0" y1="0" x2="0" y2="1"><stop offset="0" stop-color="#0c0c58" stop-opacity="0"/><stop offset="1" stop-color="#0c0c58" stop-opacity=".95"/></linearGradient></defs>
<rect width="61.500" height="49" fill="#5c6c96"/>
<g filter="url(#b4)">
<rect width="61.500" height="4.800" fill="#f1e2cb"/>
<rect y="4.300" width="61.500" height="2.500" fill="#a8a4b4"/>
<rect x="50" y="1" width="2" height="5" fill="#55586e"/><rect x="57" y="2.500" width="3" height="3" fill="#6a6e88"/>
<rect y="6.500" width="61.500" height="9" fill="#56699a"/>
<rect x="2" y="8" width="9" height="4" fill="#8a7a98"/><rect x="12" y="8.500" width="4" height="2.500" fill="#b04a5a"/><rect x="17" y="9" width="9" height="3" fill="#b4bcd4"/><rect x="34" y="9" width="18" height="3.500" fill="#8ea0c4"/><rect x="52" y="10" width="6" height="4" fill="#c8cce0"/>
<rect y="15" width="61.500" height="9" fill="#6a7aa2"/>
<rect x="0" y="15" width="10" height="5" fill="#4a4a78"/><rect x="11" y="16" width="12" height="5" fill="#9aa4bc"/><rect x="24" y="17" width="10" height="5" fill="#a8aec4"/><rect x="36" y="16" width="8" height="5" fill="#8890ac"/><rect x="50" y="15" width="11.500" height="6" fill="#9ca8c4"/>
<path d="M0 22l11-1 3 4v24H0z" fill="#1c1c3e"/>
<path d="M10 22l20-1 8 8-24 6z" fill="#4f86ae"/>
<path d="M14 35l24-6 0 12-18 5z" fill="#2a6a98"/>
<path d="M16 37l19-5M17 40l19-5" stroke="#1a4a70" stroke-width="1.200"/>
<path d="M14 35l6 11v3h-6z" fill="#16183a"/>
<path d="M38 29h12v20H36z" fill="#5a5968"/>
<path d="M35 27l8-3 3 1 0 5-11 1z" fill="#2a6a90"/>
<path d="M45 19c1.500-1 3-.5 3.500 1l2 4 1 5h-7z" fill="#1e1c28"/>
<path d="M50 26h11.500v23H50z" fill="#3c2c34"/>
<rect y="30" width="61.500" height="19" fill="url(#ffade)"/>
</g>
</svg><div class="abs" style="left:5.700px;top:210.700px;font-size:6.100px;color:#fff;line-height:8px;letter-spacing:-.2px">FRANCE</div><div class="abs" style="left:0;top:218.500px;width:61.500px;height:10px;background:#0b0b5c"></div><div class="abs" style="left:7px;top:222px;width:3px;height:3px;border:.5px solid #4a50a0;border-radius:.8px"></div><div class="abs" style="left:22px;top:222px;width:3px;height:3px;border:.5px solid #4a50a0;border-radius:.8px"></div><div class="abs" style="left:36.5px;top:222px;width:3px;height:3px;border:.5px solid #4a50a0;border-radius:.8px"></div><div class="abs" style="left:51px;top:222px;width:3px;height:3px;border:.5px solid #4a50a0;border-radius:.8px"></div><div class="abs" style="left:29.300px;top:227.300px;width:14.500px;height:1px;background:#e83a6a"></div></div>
<div class="abs" style="left:148px;top:27px;width:73px;height:157px;overflow:hidden"><div class="abs" style="left:48.60000000000002px;top:131px;width:32px;height:32px;border-radius:50%;background:#2e3148"></div></div><div class="abs" style="left:207.40000000000003px;top:168.6px;width:10.400px;height:10.400px;border-radius:50%;background:#34c3dc"></div><svg class="abs" style="left:211.10000000000002px;top:172.3px" width="3" height="3" viewBox="0 0 3 3"><path d="M.5 .5l2 2M2.500 .5l-2 2" stroke="#bfeef6" stroke-width=".5"/></svg><svg class="abs" style="left:213.10000000000002px;top:161.2px" width="5" height="5" viewBox="0 0 5 5"><circle cx="2" cy="2" r="1.400" fill="none" stroke="#cfd2e0" stroke-width=".6"/><path d="M3 3l1.500 1.500" stroke="#cfd2e0" stroke-width=".7"/></svg><svg class="abs" style="left:201.90000000000003px;top:167px" width="4.500" height="4" viewBox="0 0 4.500 4"><path d="M.3 .5h3.900L2.250 3.500z" fill="#9fa3b8"/></svg><svg class="abs" style="left:201.90000000000003px;top:177.4px" width="4.500" height="5" viewBox="0 0 4.500 5"><path d="M3.800 .8L1 2.500l2.800 1.700" stroke="#e4e6f0" stroke-width=".7" fill="none"/></svg>
<div class="abs" style="left:285.6px;top:158.2px;width:32px;height:32px;border-radius:50%;background:rgba(50,50,66,.45)"></div><div class="abs" style="left:237px;top:27px;width:73px;height:157px;overflow:hidden"><div class="abs" style="left:48.60000000000002px;top:131.2px;width:32px;height:32px;border-radius:50%;background:#2e3148"></div></div><div class="abs" style="left:296.40000000000003px;top:168.79999999999998px;width:10.400px;height:10.400px;border-radius:50%;background:#34c3dc"></div><svg class="abs" style="left:300.1px;top:172.5px" width="3" height="3" viewBox="0 0 3 3"><path d="M.5 .5l2 2M2.500 .5l-2 2" stroke="#bfeef6" stroke-width=".5"/></svg><svg class="abs" style="left:302.1px;top:161.39999999999998px" width="5" height="5" viewBox="0 0 5 5"><circle cx="2" cy="2" r="1.400" fill="none" stroke="#cfd2e0" stroke-width=".6"/><path d="M3 3l1.500 1.500" stroke="#cfd2e0" stroke-width=".7"/></svg><svg class="abs" style="left:290.90000000000003px;top:167.2px" width="4.500" height="4" viewBox="0 0 4.500 4"><path d="M.3 .5h3.900L2.250 3.500z" fill="#9fa3b8"/></svg><svg class="abs" style="left:290.90000000000003px;top:177.6px" width="4.500" height="5" viewBox="0 0 4.500 5"><path d="M3.800 .8L1 2.500l2.800 1.700" stroke="#e4e6f0" stroke-width=".7" fill="none"/></svg>
<div class="abs" style="left:115px;top:370px;width:32px;height:32px;border-radius:50%;background:rgba(50,50,66,.45)"></div><div class="abs" style="left:66.5px;top:238px;width:73.0px;height:158px;overflow:hidden"><div class="abs" style="left:48.5px;top:132px;width:32px;height:32px;border-radius:50%;background:#2e3148"></div></div><div class="abs" style="left:125.80000000000001px;top:380.6px;width:10.400px;height:10.400px;border-radius:50%;background:#34c3dc"></div><svg class="abs" style="left:129.5px;top:384.3px" width="3" height="3" viewBox="0 0 3 3"><path d="M.5 .5l2 2M2.500 .5l-2 2" stroke="#bfeef6" stroke-width=".5"/></svg><svg class="abs" style="left:131.5px;top:373.2px" width="5" height="5" viewBox="0 0 5 5"><circle cx="2" cy="2" r="1.400" fill="none" stroke="#cfd2e0" stroke-width=".6"/><path d="M3 3l1.500 1.500" stroke="#cfd2e0" stroke-width=".7"/></svg><svg class="abs" style="left:120.30000000000001px;top:379px" width="4.500" height="4" viewBox="0 0 4.500 4"><path d="M.3 .5h3.900L2.250 3.500z" fill="#9fa3b8"/></svg><svg class="abs" style="left:120.30000000000001px;top:389.4px" width="4.500" height="5" viewBox="0 0 4.500 5"><path d="M3.800 .8L1 2.500l2.800 1.700" stroke="#e4e6f0" stroke-width=".7" fill="none"/></svg>
<div class="abs" style="left:228px;top:238px;width:148.5px;height:199px;overflow:hidden"><div class="abs" style="left:48px;top:132px;width:32px;height:32px;border-radius:50%;background:#2e3148"></div></div><div class="abs" style="left:286.8px;top:380.6px;width:10.400px;height:10.400px;border-radius:50%;background:#34c3dc"></div><svg class="abs" style="left:290.5px;top:384.3px" width="3" height="3" viewBox="0 0 3 3"><path d="M.5 .5l2 2M2.500 .5l-2 2" stroke="#bfeef6" stroke-width=".5"/></svg><svg class="abs" style="left:292.5px;top:373.2px" width="5" height="5" viewBox="0 0 5 5"><circle cx="2" cy="2" r="1.400" fill="none" stroke="#cfd2e0" stroke-width=".6"/><path d="M3 3l1.500 1.500" stroke="#cfd2e0" stroke-width=".7"/></svg><svg class="abs" style="left:281.3px;top:379px" width="4.500" height="4" viewBox="0 0 4.500 4"><path d="M.3 .5h3.900L2.250 3.500z" fill="#9fa3b8"/></svg><svg class="abs" style="left:281.3px;top:389.4px" width="4.500" height="5" viewBox="0 0 4.500 5"><path d="M3.800 .8L1 2.500l2.800 1.700" stroke="#e4e6f0" stroke-width=".7" fill="none"/></svg>
<div class="abs" style="left:285.3px;top:157.6px;width:33.10000000000001px;height:32.999999999999986px;border:0.8px solid #9cc3e2"></div>
<div class="abs" style="left:114.6px;top:368.90000000000003px;width:33.3px;height:33.499999999999986px;border:0.8px solid #9cc3e2"></div>
<div class="abs" style="left:275.20000000000005px;top:368.90000000000003px;width:33.199999999999974px;height:33.499999999999986px;border:0.8px solid #9cc3e2"></div>
<div class="abs" style="left:114.25px;top:157.45px;width:204.5px;height:245.5px;border:1.5px solid rgba(74,146,212,.8)"></div>
<div class="abs" style="left:112.4px;top:155.6px;width:5.200px;height:5.200px;border-radius:50%;background:#fff;border:.9px solid #4a8fc8"></div>
<div class="abs" style="left:213.70000000000002px;top:155.6px;width:5.200px;height:5.200px;border-radius:50%;background:#fff;border:.9px solid #4a8fc8"></div>
<div class="abs" style="left:315.4px;top:155.6px;width:5.200px;height:5.200px;border-radius:50%;background:#fff;border:.9px solid #4a8fc8"></div>
<div class="abs" style="left:112.4px;top:277.4px;width:5.200px;height:5.200px;border-radius:50%;background:#fff;border:.9px solid #4a8fc8"></div>
<div class="abs" style="left:315.4px;top:277.4px;width:5.200px;height:5.200px;border-radius:50%;background:#fff;border:.9px solid #4a8fc8"></div>
<div class="abs" style="left:112.4px;top:399.59999999999997px;width:5.200px;height:5.200px;border-radius:50%;background:#fff;border:.9px solid #4a8fc8"></div>
<div class="abs" style="left:213.70000000000002px;top:399.59999999999997px;width:5.200px;height:5.200px;border-radius:50%;background:#fff;border:.9px solid #4a8fc8"></div>
<div class="abs" style="left:315.4px;top:399.59999999999997px;width:5.200px;height:5.200px;border-radius:50%;background:#fff;border:.9px solid #4a8fc8"></div>
<div class="abs" style="left:55.30000000000001px;top:350.7px;width:11.200px;height:7.500px;border-radius:1.500px;background:#2c8fe2"></div>
<div class="abs" style="left:58.5px;top:353px;width:5px;height:.8px;background:#d8ecfb"></div><div class="abs" style="left:58.5px;top:355px;width:5px;height:.8px;background:#d8ecfb"></div>
<div class="abs" style="left:66.5px;top:353.9px;width:72px;height:.9px;background:repeating-linear-gradient(90deg,#3f93dc 0,#3f93dc 1.600px,transparent 1.600px,transparent 4px)"></div></div>

<!-- PROPS -->
<div id="props">
<!--PROPS_CONTENT-->
<div class="abs" style="left:1px;top:0;width:134px;height:462px"><!-- align row : panel origin abs (687,48) -->
<svg class="abs" style="left:0;top:0" width="134" height="21" viewBox="0 0 134 21"><g fill="#555">
<rect x="7" y="7" width="8" height="1"/><rect x="8.200" y="8.700" width="2.400" height="5.900"/><rect x="11.600" y="8.700" width="2.200" height="3.400"/>
<rect x="22" y="10.800" width="7.700" height=".9"/><rect x="23.300" y="8.200" width="2.200" height="6"/><rect x="26.500" y="9.400" width="2" height="3.600"/>
<rect x="36" y="14" width="8" height="1"/><rect x="37.200" y="7.500" width="2.200" height="5.900"/><rect x="40.600" y="9.900" width="2.200" height="3.500"/>
<rect x="51.200" y="7" width=".9" height="8"/><rect x="56.200" y="7" width=".9" height="8"/><rect x="53" y="8.300" width="2.200" height="5.400"/>
<rect x="75" y="7" width="1" height="8"/><rect x="76.700" y="8.300" width="3.600" height="2.100"/><rect x="76.700" y="11.500" width="5.600" height="2.100"/>
<rect x="91.500" y="7" width=".9" height="8"/><rect x="89.800" y="8.300" width="4.300" height="2.100"/><rect x="88.600" y="11.500" width="6.700" height="2.100"/>
<rect x="108.700" y="7" width="1" height="8"/><rect x="104.400" y="8.300" width="3.600" height="2.100"/><rect x="102.400" y="11.500" width="5.600" height="2.100"/>
<rect x="116" y="8.600" width="8" height=".9"/><rect x="116" y="13" width="8" height=".9"/><rect x="117.300" y="10.200" width="5.400" height="2.100"/>
</g></svg>
<div class="abs" style="left:66px;top:0;width:1px;height:21px;background:#e6e6e6"></div>
<div class="hr" style="left:-1px;top:20.500px;width:135px"></div>
<!-- repeat grid row -->
<div class="abs" style="left:7px;top:28.300px;width:51px;height:12.700px;background:#fdfdfd;border:.7px solid #e4e4e4;border-radius:1.500px"></div>
<svg class="abs" style="left:10px;top:31.200px" width="8" height="7" viewBox="0 0 9 8"><g fill="none" stroke="#777" stroke-width=".8"><rect x=".6" y=".5" width="3.200" height="2.800"/><rect x="5" y=".5" width="3.200" height="2.800"/><rect x=".6" y="4.500" width="3.200" height="2.800"/><rect x="5" y="4.500" width="3.200" height="2.800"/></g></svg>
<div class="lbl" style="left:21.700px;top:31px;font-size:5.800px;font-weight:bold;color:#484848;letter-spacing:0">Repeat Grid</div>
<svg class="abs" style="left:73px;top:29px" width="56" height="12" viewBox="0 0 56 12"><g fill="none" stroke="#777" stroke-width=".9">
<rect x="1.500" y="1.500" width="5.500" height="5.500" rx=".8" fill="#cfcfcf"/><rect x="4" y="4" width="5.500" height="5.500" rx=".8" fill="#cfcfcf"/>
<rect x="15.500" y="1.500" width="5.500" height="5.500" rx=".8"/><rect x="18" y="4" width="5.500" height="5.500" rx=".8" fill="#f7f7f7"/>
<rect x="29.500" y="1.500" width="5.500" height="5.500" rx=".8"/><rect x="32" y="4" width="5.500" height="5.500" rx=".8"/>
<rect x="43.500" y="1.500" width="5.500" height="5.500" rx=".8"/><rect x="46" y="4" width="5.500" height="5.500" rx=".8"/>
</g></svg>
<div class="hr" style="left:-1px;top:48.500px;width:135px"></div>
<!-- W/H -->
<div class="lbl" style="left:7.500px;top:60px;font-size:5.200px;color:#9a9a9a">W</div>
<div class="lbl" style="left:16px;top:59px;font-size:6.800px;color:#484848">166</div>
<div class="hr" style="left:16px;top:69px;width:26px;background:#e2e2e2"></div>
<div class="lbl" style="left:52.500px;top:60px;font-size:5.200px;color:#9a9a9a">X</div>
<div class="lbl" style="left:60px;top:59px;font-size:6.800px;color:#484848">-16234</div>
<div class="hr" style="left:60px;top:69px;width:26px;background:#e2e2e2"></div>
<svg class="abs" style="left:94px;top:58.500px" width="9" height="9" viewBox="0 0 9 9"><path d="M7.600 3.200A3.400 3.400 0 1 0 7.900 5.200" fill="none" stroke="#666" stroke-width=".9"/><path d="M8.300 1.300v2.300H6z" fill="#666"/></svg>
<div class="lbl" style="left:107px;top:59px;font-size:6.800px;color:#484848">0°</div>
<div class="hr" style="left:107px;top:69px;width:19px;background:#e2e2e2"></div>
<div class="lbl" style="left:8px;top:80.500px;font-size:5.200px;color:#9a9a9a">H</div>
<div class="lbl" style="left:16px;top:79.500px;font-size:6.800px;color:#484848">166</div>
<div class="hr" style="left:16px;top:90px;width:26px;background:#e2e2e2"></div>
<div class="lbl" style="left:52.500px;top:80.500px;font-size:5.200px;color:#9a9a9a">Y</div>
<div class="lbl" style="left:60px;top:79.500px;font-size:6.800px;color:#484848">-3479</div>
<div class="hr" style="left:60px;top:90px;width:26px;background:#e2e2e2"></div>
<svg class="abs" style="left:41px;top:62px" width="8" height="24" viewBox="0 0 8 24"><path d="M1 1.500h3.500v6M4.500 15.500v6H1" fill="none" stroke="#dadada" stroke-width=".8"/><rect x="3" y="10.500" width="3.200" height="2.800" fill="#aaa"/><path d="M3.600 10.500V9.300a1 1 0 0 1 2 0" fill="none" stroke="#aaa" stroke-width=".7"/></svg>
<div class="hr" style="left:-1px;top:103px;width:135px"></div>
<!-- Appearance -->
<div class="lbl" style="left:6.500px;top:110px;font-size:5.400px;letter-spacing:.55px;color:#8a8a8a">APPEARANCE</div>
<svg class="abs" style="left:6.500px;top:131.500px" width="8" height="8" viewBox="0 0 8 8"><rect x=".5" y=".5" width="7" height="7" fill="#fff" stroke="#666" stroke-width=".9"/><g fill="#999"><rect x="1.500" y="1.500" width="1.200" height="1.200"/><rect x="4" y="1.500" width="1.200" height="1.200"/><rect x="2.800" y="2.800" width="1.200" height="1.200"/><rect x="5.200" y="2.800" width="1.200" height="1.200"/><rect x="1.500" y="4" width="1.200" height="1.200"/><rect x="4" y="4" width="1.200" height="1.200"/><rect x="2.800" y="5.200" width="1.200" height="1.200"/><rect x="5.200" y="5.200" width="1.200" height="1.200"/></g></svg>
<div class="lbl" style="left:19px;top:131.500px;font-size:6.800px;color:#333">100%</div>
<div class="hr" style="left:19px;top:142px;width:20px;background:#e6e6e6"></div>
<div class="abs" style="left:44.500px;top:134.500px;width:78px;height:1.500px;background:#3f87d8"></div>
<div class="abs" style="left:120px;top:132px;width:7px;height:7px;border-radius:50%;background:#fff;border:.6px solid #d0d0d0"></div>
<!-- Fill -->
<div class="abs" style="left:7px;top:152.500px;width:7.500px;height:7.500px;background:#505050;border-radius:1px"></div>
<div class="abs" style="left:8.500px;top:155.500px;width:4.500px;height:1.500px;background:#f0f0f0"></div>
<div class="abs" style="left:21px;top:153px;width:14px;height:6.500px;background:#fff;border:.7px solid #ccc;border-radius:1px"></div>
<div class="abs" style="left:26px;top:156px;width:4px;height:.8px;background:#ccc"></div>
<div class="lbl" style="left:41.500px;top:151.700px;font-size:6.200px;color:#555">Fill</div>
<svg class="abs" style="left:118px;top:151px" width="10" height="10" viewBox="0 0 10 10"><path d="M1.200 8.800l.4-1.800 4-4 1.400 1.400-4 4z" fill="none" stroke="#555" stroke-width=".8"/><path d="M5.300 2.500l2.200 2.200M6.200 2.700l1.600-1.600a.9.900 0 0 1 1.200 1.200L7.400 3.900z" fill="#444" stroke="#444" stroke-width=".9"/></svg>
<!-- Border -->
<div class="abs" style="left:7px;top:173.500px;width:7.500px;height:7.500px;background:#fff;border:.8px solid #b8b8b8;border-radius:1px"></div>
<div class="abs" style="left:21px;top:174px;width:14px;height:6.500px;background:#6f6f6f;border:.7px solid #5f5f5f;border-radius:1px"></div>
<div class="lbl" style="left:41.500px;top:172.700px;font-size:6.200px;color:#555">Border</div>
<svg class="abs" style="left:118px;top:172px" width="10" height="10" viewBox="0 0 10 10"><path d="M1.200 8.800l.4-1.800 4-4 1.400 1.400-4 4z" fill="none" stroke="#555" stroke-width=".8"/><path d="M5.300 2.500l2.200 2.200M6.200 2.700l1.600-1.600a.9.900 0 0 1 1.200 1.200L7.400 3.900z" fill="#444" stroke="#444" stroke-width=".9"/></svg>
<div class="hr" style="left:-1px;top:193px;width:135px"></div>
</div></div>
</div>
</body>
</html>
